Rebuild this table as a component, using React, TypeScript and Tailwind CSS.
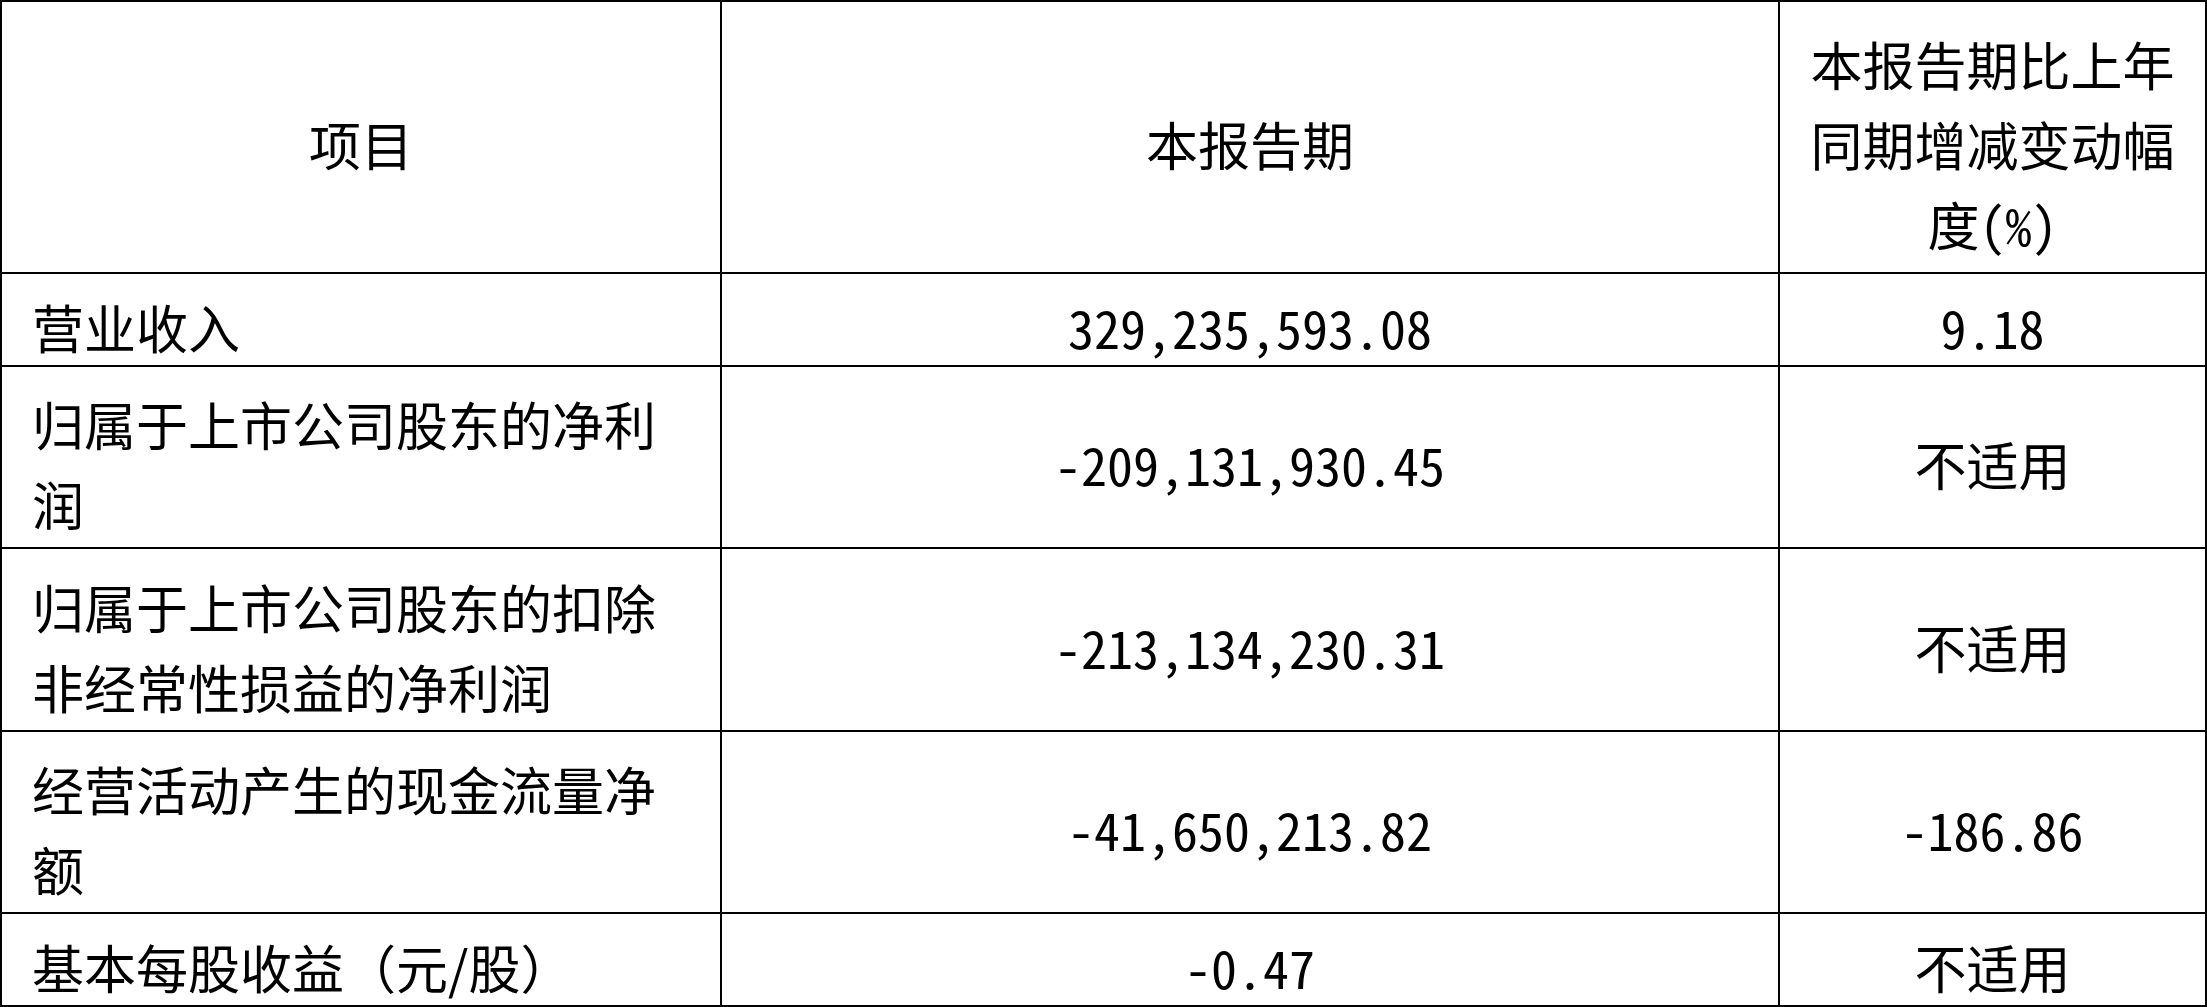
import React from 'react';

const rows = [
  { item: '营业收入', amount: '329,235,593.08', change: '9.18', h: 'h-[91px]' },
  { item: '归属于上市公司股东的净利润', amount: '-209,131,930.45', change: '不适用', h: 'h-[180px]' },
  { item: '归属于上市公司股东的扣除非经常性损益的净利润', amount: '-213,134,230.31', change: '不适用', h: 'h-[181px]' },
  { item: '经营活动产生的现金流量净额', amount: '-41,650,213.82', change: '-186.86', h: 'h-[180px]' },
  { item: '基本每股收益（元/股）', amount: '-0.47', change: '不适用', h: 'h-[91px]' },
];

const cell = 'bg-white flex items-center pt-[14px] leading-[80px]';
const num = "[font-feature-settings:'hwid']";

const App: React.FC = () => {
  return (
    <div className="w-[2207px] h-[1007px] bg-white text-black text-[52px] font-['Noto_Sans_CJK_SC','Noto_Sans',sans-serif]">
      <div className="grid grid-cols-[718px_1056px_425px] gap-[2px] p-[2px] bg-black">
        {/* header */}
        <div className={`${cell} h-[270px] justify-center`}>项目</div>
        <div className={`${cell} h-[270px] justify-center`}>本报告期</div>
        <div className={`${cell} h-[270px] justify-center text-center px-[20px] ${num}`}>
          本报告期比上年同期增减变动幅度(%)
        </div>

        {rows.map((r) => (
          <React.Fragment key={r.item}>
            <div className={`${cell} ${r.h} pl-[30px] pr-[30px]`}>{r.item}</div>
            <div className={`${cell} ${r.h} justify-center ${num}`}>{r.amount}</div>
            <div className={`${cell} ${r.h} justify-center ${num}`}>{r.change}</div>
          </React.Fragment>
        ))}
      </div>
    </div>
  );
};

export default App;
